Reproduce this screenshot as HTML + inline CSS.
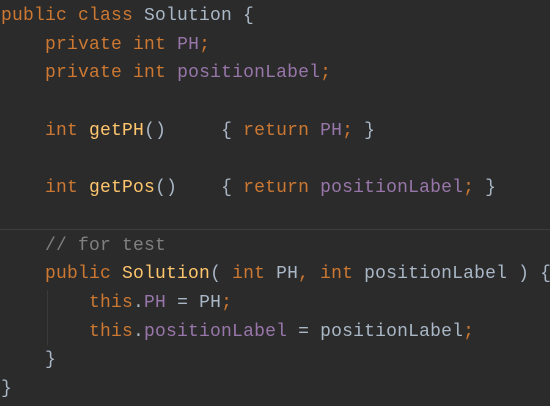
<!DOCTYPE html>
<html><head><style>
html,body{margin:0;padding:0;background:#2b2b2b;width:550px;height:406px;overflow:hidden}
pre{margin:0;padding:2px 0 0 1px;font-family:"Liberation Mono",monospace;font-size:18px;letter-spacing:0.2px;line-height:28.7px;color:#a9b7c6;position:relative}
.k{color:#cc7832}.p{color:#9876aa}.m{color:#ffc66d}.c{color:#808080}
.sep{position:absolute;left:0;top:229px;width:550px;height:1px;background:#3d3d3d}
.guide{position:absolute;left:47px;top:290px;width:1px;height:55px;background:#3a3a3a}
</style></head><body>
<div class="sep"></div><div class="guide"></div>
<pre><span class="k">public class</span> Solution {
    <span class="k">private int</span> <span class="p">PH</span><span class="k">;</span>
    <span class="k">private int</span> <span class="p">positionLabel</span><span class="k">;</span>

    <span class="k">int</span> <span class="m">getPH</span>()     { <span class="k">return</span> <span class="p">PH</span><span class="k">;</span> }

    <span class="k">int</span> <span class="m">getPos</span>()    { <span class="k">return</span> <span class="p">positionLabel</span><span class="k">;</span> }

    <span class="c">// for test</span>
    <span class="k">public</span> <span class="m">Solution</span>( <span class="k">int</span> PH<span class="k">,</span> <span class="k">int</span> positionLabel ) {
        <span class="k">this</span>.<span class="p">PH</span> = PH<span class="k">;</span>
        <span class="k">this</span>.<span class="p">positionLabel</span> = positionLabel<span class="k">;</span>
    }
}</pre>
</body></html>
